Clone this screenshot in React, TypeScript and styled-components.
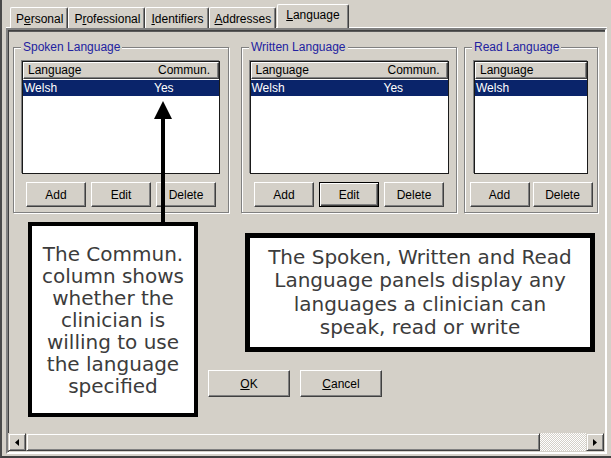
import styled, { createGlobalStyle } from "styled-components";

const GlobalStyle = createGlobalStyle`
  html, body { margin: 0; padding: 0; background: #d4d0c8; }
  body { font-family: "Liberation Sans", Arial, sans-serif; font-size: 12px; color: #000; }
  * { box-sizing: border-box; }
`;

type AccessText = { text: string; at: number };

const tabs: (AccessText & { active?: boolean })[] = [
  { text: "Personal", at: 1 },
  { text: "Professional", at: 1 },
  { text: "Identifiers", at: 0 },
  { text: "Addresses", at: 0 },
  { text: "Language", at: 0, active: true },
];

type Panel = {
  title: string;
  width: number;
  offset: number;
  listWidth: number;
  columns: { label: string; width?: number }[];
  rows: string[][];
  buttons: { label: string; isDefault?: boolean }[];
  buttonGap: number;
};

const panels: Panel[] = [
  {
    title: "Spoken Language",
    width: 216,
    offset: 5,
    listWidth: 198,
    columns: [{ label: "Language", width: 130 }, { label: "Commun." }],
    rows: [["Welsh", "Yes"]],
    buttons: [{ label: "Add" }, { label: "Edit" }, { label: "Delete" }],
    buttonGap: 5,
  },
  {
    title: "Written Language",
    width: 216,
    offset: 12,
    listWidth: 199,
    columns: [{ label: "Language", width: 132 }, { label: "Commun." }],
    rows: [["Welsh", "Yes"]],
    buttons: [{ label: "Add" }, { label: "Edit", isDefault: true }, { label: "Delete" }],
    buttonGap: 5,
  },
  {
    title: "Read Language",
    width: 134,
    offset: 7,
    listWidth: 114,
    columns: [{ label: "Language" }],
    rows: [["Welsh"]],
    buttons: [{ label: "Add" }, { label: "Delete" }],
    buttonGap: 3,
  },
];

function Access({ text, at }: AccessText) {
  return (
    <>
      {text.slice(0, at)}
      <u>{text[at]}</u>
      {text.slice(at + 1)}
    </>
  );
}

export default function App() {
  return (
    <>
      <GlobalStyle />
      <Window>
        <TabStrip>
          {tabs.map((t) => (
            <Tab key={t.text} $active={t.active}>
              <Access text={t.text} at={t.at} />
            </Tab>
          ))}
        </TabStrip>
        <TabPage>
          <GroupsRow>
            {panels.map((p) => (
              <Group key={p.title} $width={p.width} $offset={p.offset}>
                <Legend>{p.title}</Legend>
                <GroupBody>
                  <ListView $width={p.listWidth}>
                    <ListHeader>
                      {p.columns.map((c) => (
                        <HeaderCell key={c.label} $width={c.width}>
                          {c.label}
                        </HeaderCell>
                      ))}
                    </ListHeader>
                    {p.rows.map((r) => (
                      <ListRow key={r[0]} $selected>
                        {r.map((cell, i) => (
                          <RowCell key={i} $width={p.columns[i].width}>
                            {cell}
                          </RowCell>
                        ))}
                      </ListRow>
                    ))}
                  </ListView>
                  <ButtonRow $gap={p.buttonGap}>
                    {p.buttons.map((b) => (
                      <Button key={b.label} $default={b.isDefault}>
                        {b.label}
                      </Button>
                    ))}
                  </ButtonRow>
                </GroupBody>
              </Group>
            ))}
          </GroupsRow>
          <Spacer />
          <DialogButtons>
            <Button $wide>
              <Access text="OK" at={0} />
            </Button>
            <Button $wide>
              <Access text="Cancel" at={0} />
            </Button>
          </DialogButtons>
          <ScrollBar>
            <ScrollButton>
              <svg width="4" height="7" viewBox="0 0 4 7">
                <polygon points="4,0 4,7 0,3.5" fill="#000" />
              </svg>
            </ScrollButton>
            <Thumb />
            <Track />
            <ScrollButton>
              <svg width="4" height="7" viewBox="0 0 4 7">
                <polygon points="0,0 0,7 4,3.5" fill="#000" />
              </svg>
            </ScrollButton>
          </ScrollBar>
        </TabPage>

        <Pointer width="22" height="124" viewBox="0 0 22 124">
          <polygon points="11,1 2,19 20,19" fill="#000" />
          <rect x="9" y="18" width="4" height="106" fill="#000" />
        </Pointer>
        <Note $left={26} $top={222} $width={170} $height={195} $border={4} $lineHeight={22}>
          The Commun.
          <br />
          column shows
          <br />
          whether the
          <br />
          clinician is
          <br />
          willing to use
          <br />
          the language
          <br />
          specified
        </Note>
        <Note $left={243} $top={233} $width={350} $height={119} $border={5} $lineHeight={23.5}>
          The Spoken, Written and Read
          <br />
          Language panels display any
          <br />
          languages a clinician can
          <br />
          speak, read or write
        </Note>
      </Window>
    </>
  );
}

const Window = styled.div`
  position: relative;
  width: 611px;
  height: 458px;
  overflow: hidden;
  display: flex;
  flex-direction: column;
  background: #d4d0c8;
  border-left: 2px solid #4a4a4a;
  border-bottom: 2px solid #404040;
`;

const TabStrip = styled.div`
  height: 28px;
  display: flex;
  align-items: flex-end;
  padding-left: 8px;
`;

const Tab = styled.div<{ $active?: boolean }>`
  position: relative;
  z-index: ${(p) => (p.$active ? 1 : 0)};
  height: ${(p) => (p.$active ? 24 : 21)}px;
  padding: ${(p) => (p.$active ? "3px 8px 0 8px" : "4px 4px 0 5px")};
  margin-left: ${(p) => (p.$active ? 1 : 0)}px;
  line-height: 14px;
  white-space: nowrap;
  background: #d4d0c8;
  border-top: 1px solid #fff;
  border-left: 1px solid #fff;
  border-right: 1px solid #404040;
  border-radius: 2px 2px 0 0;
  box-shadow: inset -1px 0 0 #808080;
`;

const TabPage = styled.div`
  flex: 1;
  margin: 0 4px 2px 4px;
  display: flex;
  flex-direction: column;
  border: 2px solid;
  border-color: #808080 #fff #fff #808080;
  box-shadow: inset 1px 1px 0 #404040, inset 0 2px 0 #5a5a5a, 0 -1px 0 #fff;
`;

const GroupsRow = styled.div`
  display: flex;
  padding-top: 10px;
`;

const Group = styled.fieldset<{ $width: number; $offset: number }>`
  width: ${(p) => p.$width}px;
  min-width: 0;
  margin: 0 0 0 ${(p) => p.$offset}px;
  padding: 0;
  border: 1px solid #808080;
  box-shadow: inset 1px 1px 0 #fff, 1px 1px 0 #fff;
`;

const Legend = styled.legend`
  margin-left: 7px;
  padding: 0 2px;
  line-height: 14px;
  color: #2222a0;
  background: #d4d0c8;
`;

const GroupBody = styled.div`
  padding: 7px 0 5px;
`;

const ListView = styled.div<{ $width: number }>`
  width: ${(p) => p.$width}px;
  height: 113px;
  margin: 0 auto;
  background: #fff;
  border: 1px solid #1a1a1a;
  box-shadow: -1px -1px 0 #808080;
`;

const ListHeader = styled.div`
  display: flex;
  height: 17px;
  line-height: 15px;
  background: #d4d0c8;
  border-top: 1px solid #fff;
  border-left: 1px solid #fff;
  border-right: 1px solid #404040;
  border-bottom: 1px solid #404040;
  box-shadow: inset -1px -1px 0 #808080;
`;

const HeaderCell = styled.div<{ $width?: number }>`
  ${(p) => (p.$width ? `width: ${p.$width}px;` : "flex: 1;")}
  padding-left: 4px;
  white-space: nowrap;
`;

const ListRow = styled.div<{ $selected?: boolean }>`
  display: flex;
  height: 16px;
  margin-top: 1px;
  line-height: 16px;
  background: ${(p) => (p.$selected ? "#0a246a" : "transparent")};
  color: ${(p) => (p.$selected ? "#fff" : "#000")};
`;

const RowCell = styled.div<{ $width?: number }>`
  ${(p) => (p.$width ? `width: ${p.$width}px;` : "flex: 1;")}
  padding-left: 1px;
  white-space: nowrap;
`;

const ButtonRow = styled.div<{ $gap: number }>`
  display: flex;
  justify-content: center;
  gap: ${(p) => p.$gap}px;
  margin-top: 8px;
`;

const Button = styled.button<{ $default?: boolean; $wide?: boolean }>`
  width: ${(p) => (p.$wide ? 82 : 60)}px;
  height: ${(p) => (p.$wide ? 27 : 25)}px;
  padding: 0;
  font: 12px "Liberation Sans", Arial, sans-serif;
  color: #000;
  background: #d4d0c8;
  border: 1px solid;
  border-color: ${(p) => (p.$default ? "#000" : "#fff #404040 #404040 #fff")};
  box-shadow: ${(p) =>
    p.$default
      ? "inset 1px 1px 0 #fff, inset -1px -1px 0 #404040, inset -2px -2px 0 #808080"
      : "inset -1px -1px 0 #808080"};
`;

const Spacer = styled.div`
  flex: 1;
`;

const DialogButtons = styled.div`
  display: flex;
  gap: 10px;
  padding-left: 200px;
`;

const ScrollBar = styled.div`
  display: flex;
  height: 18px;
  margin: 36px 1px 1px 0;
`;

const raised = `
  background: #d4d0c8;
  border: 1px solid;
  border-color: #d4d0c8 #404040 #404040 #d4d0c8;
  box-shadow: inset 1px 1px 0 #fff, inset -1px -1px 0 #808080;
`;

const ScrollButton = styled.div`
  width: 18px;
  display: flex;
  align-items: center;
  justify-content: center;
  ${raised}
`;

const Thumb = styled.div`
  flex: 1;
  ${raised}
`;

const Track = styled.div`
  width: 46px;
  background: repeating-conic-gradient(#fff 0 25%, #d4d0c8 0 50%) 0 0 / 2px 2px;
`;

const Pointer = styled.svg`
  position: absolute;
  left: 150px;
  top: 100px;
`;

const Note = styled.div<{
  $left: number;
  $top: number;
  $width: number;
  $height: number;
  $border: number;
  $lineHeight: number;
}>`
  position: absolute;
  left: ${(p) => p.$left}px;
  top: ${(p) => p.$top}px;
  width: ${(p) => p.$width}px;
  height: ${(p) => p.$height}px;
  border: ${(p) => p.$border}px solid #000;
  background: #fff;
  display: flex;
  align-items: center;
  justify-content: center;
  text-align: center;
  font: 20px/${(p) => p.$lineHeight}px "DejaVu Sans", sans-serif;
  color: #3c3c3c;
  white-space: nowrap;
`;
